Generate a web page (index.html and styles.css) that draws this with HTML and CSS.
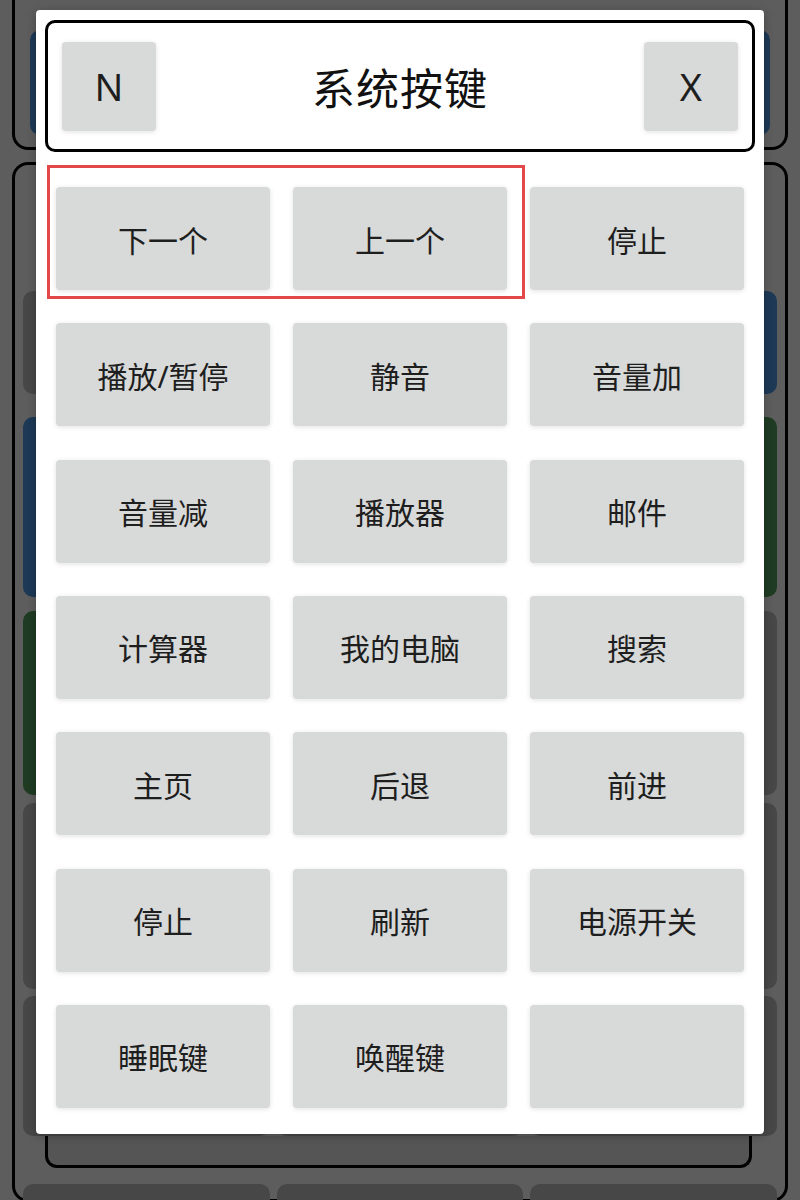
FILE: index.html
```html
<!doctype html>
<html lang="zh-CN">
<head>
	<meta charset="UTF-8">
	<title>系统按键</title>

	<link rel="stylesheet" href="styles.css">
</head>
<body>

	<!-- teclado por baixo do dialogo -->
	<div class="app">
		<div class="deck deck-top">
			<div class="tile tile-blue tile-wide"></div>
		</div>

		<div class="deck deck-main">
			<div class="fileira fileira-1">
				<div class="tile"></div><div class="tile"></div><div class="tile"></div>
			</div>
			<div class="fileira fileira-2">
				<div class="tile tile-dark"></div><div class="tile tile-dark"></div><div class="tile tile-blue"></div>
			</div>
			<div class="fileira fileira-3">
				<div class="tile tile-blue"></div><div class="tile tile-dark"></div><div class="tile tile-green"></div>
			</div>
			<div class="fileira fileira-4">
				<div class="tile tile-green"></div><div class="tile tile-dark"></div><div class="tile tile-dark"></div>
			</div>
			<div class="fileira fileira-5">
				<div class="tile tile-dark"></div><div class="tile tile-dark"></div><div class="tile tile-dark"></div>
			</div>
			<div class="fileira fileira-6">
				<div class="tile tile-dark"></div><div class="tile tile-dark"></div><div class="tile tile-dark"></div>
			</div>
			<div class="slot"></div>
			<div class="fileira fileira-pe">
				<div class="tile tile-dark"></div><div class="tile tile-dark"></div><div class="tile tile-dark"></div>
			</div>
		</div>
	</div>

	<!-- dialogo -->
	<div class="dialogo">
		<div class="cabecalho">
			<div class="botao botao-canto">N</div>
			<div class="titulo">系统按键</div>
			<div class="botao botao-canto">X</div>
		</div>

		<div class="grade">
			<div class="botao">下一个</div>
			<div class="botao">上一个</div>
			<div class="botao">停止</div>

			<div class="botao">播放/暂停</div>
			<div class="botao">静音</div>
			<div class="botao">音量加</div>

			<div class="botao">音量减</div>
			<div class="botao">播放器</div>
			<div class="botao">邮件</div>

			<div class="botao">计算器</div>
			<div class="botao">我的电脑</div>
			<div class="botao">搜索</div>

			<div class="botao">主页</div>
			<div class="botao">后退</div>
			<div class="botao">前进</div>

			<div class="botao">停止</div>
			<div class="botao">刷新</div>
			<div class="botao">电源开关</div>

			<div class="botao">睡眠键</div>
			<div class="botao">唤醒键</div>
			<div class="botao"></div>
		</div>

		<div class="selecao"></div>
	</div>

</body>
</html>
```

FILE: styles.css
```css
* {margin: 0; padding: 0; box-sizing: border-box;}
html, body {height: 1200px; overflow: hidden;}
body {background: #5d5d5d; font-family: "Noto Sans", "Noto Sans CJK SC", sans-serif; position: relative;}

/* teclado de fundo */
.app {padding: 0 12px;}
.deck {border: 3px solid #000; border-radius: 16px;}
.deck-top {margin-top: -20px; height: 170px; padding: 47px 15px 0;}
.deck-main {margin-top: 12px; height: 1040px; padding: 10px 8px 0;}
.tile {border-radius: 10px; background: transparent;}
.tile-wide {height: 105px;}
.tile-dark {background: #474747;}
.tile-blue {background: #1c3955;}
.tile-green {background: #1f3b22;}
.fileira {display: grid; grid-template-columns: repeat(3, 1fr); gap: 7px;}
.fileira-1 {height: 106px;}
.fileira-2 {height: 103px; margin-top: 10px;}
.fileira-3 {height: 180px; margin-top: 23px;}
.fileira-4 {height: 184px; margin-top: 14px;}
.fileira-5 {height: 186px; margin-top: 8px;}
.fileira-6 {height: 140px; margin-top: 7px;}
.slot {height: 32px; margin: 0 25px 0 22px; border: 3px solid #000; border-top: 0; border-radius: 0 0 12px 12px; background: #555;}
.fileira-pe {height: 60px; margin-top: 16px;}

/* dialogo */
.dialogo {position: absolute; top: 10px; left: 36px; width: 728px; height: 1124px; padding: 10px 9px 26px; background: #fff; border-radius: 4px; box-shadow: 0 2px 8px rgba(0,0,0,.25);}
.cabecalho {height: 132px; border: 3px solid #000; border-radius: 10px; padding: 0 14px; display: flex; align-items: center; justify-content: space-between;}
.titulo {font-size: 43px; color: #111; letter-spacing: 1px;}
.botao {background: #d8d9d9; border-radius: 4px; box-shadow: 0 1px 5px rgba(0,0,0,.12); display: flex; align-items: center; justify-content: center; font-size: 30px; color: #1e1e1e;}
.botao-canto {width: 94px; height: 89px; font-size: 38px;}
.grade {display: grid; grid-template-columns: repeat(3, 214px); grid-auto-rows: 103px; column-gap: 23px; row-gap: 33.33px; margin-top: 35px; padding: 0 11px;}
.selecao {position: absolute; top: 155px; left: 11px; width: 478px; height: 134px; border: 3px solid #e2474a;}
```
